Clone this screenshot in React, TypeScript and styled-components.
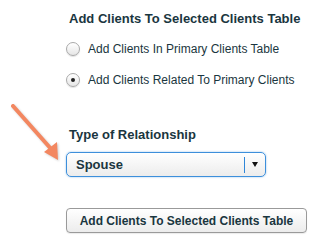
import React, { useState } from 'react';
import styled, { createGlobalStyle } from 'styled-components';

const GlobalStyle = createGlobalStyle`
    html, body {
        margin: 0;
        padding: 0;
        background: #ffffff;
    }
    body {
        font-family: "Liberation Sans", Arial, Helvetica, sans-serif;
        color: #1a3640;
    }
`;

const Page = styled.div`
    position: relative;
    width: 318px;
    height: 246px;
    overflow: hidden;
    padding: 11px 0 0 66px;
    box-sizing: border-box;
`;

const Heading = styled.div`
    font-size: 13px;
    font-weight: bold;
    line-height: 15px;
    padding-left: 3px;
    white-space: nowrap;
`;

const RadioList = styled.div`
    display: flex;
    flex-direction: column;
    gap: 15px;
    margin-top: 15px;
`;

const RadioRow = styled.label`
    display: flex;
    align-items: center;
    gap: 8px;
    font-size: 12px;
    line-height: 16px;
    white-space: nowrap;
    cursor: pointer;
`;

const RadioCircle = styled.span<{ checked: boolean }>`
    display: inline-flex;
    align-items: center;
    justify-content: center;
    width: 12px;
    height: 12px;
    border-radius: 50%;
    border: 1px solid #a9a9a9;
    background: linear-gradient(#ffffff, #e6e6e6);
    box-shadow: inset 0 1px 1px rgba(255, 255, 255, 0.8), 0 1px 1px rgba(0, 0, 0, 0.12);
    &::after {
        content: '';
        display: ${(props) => (props.checked ? 'block' : 'none')};
        width: 4px;
        height: 4px;
        border-radius: 50%;
        background: #222222;
    }
`;

const Label = styled.div`
    font-size: 13px;
    font-weight: bold;
    line-height: 15px;
    padding-left: 3px;
    margin-top: 39px;
`;

const SelectBox = styled.div`
    display: flex;
    align-items: center;
    width: 200px;
    height: 25px;
    margin-top: 10px;
    box-sizing: border-box;
    border: 1px solid #3d8fdb;
    border-radius: 5px;
    background: linear-gradient(#ffffff, #ececec);
    box-shadow: 0 0 2px rgba(61, 143, 219, 0.6);
`;

const SelectValue = styled.div`
    flex: 1;
    padding-left: 9px;
    font-size: 13px;
    font-weight: bold;
    line-height: 15px;
`;

const Divider = styled.div`
    width: 1px;
    height: 16px;
    background: #2f86d8;
`;

const Caret = styled.div`
    width: 20px;
    display: flex;
    justify-content: center;
    align-items: center;
    &::after {
        content: '';
        border-left: 3.5px solid transparent;
        border-right: 3.5px solid transparent;
        border-top: 5px solid #111111;
    }
`;

const Button = styled.button`
    display: block;
    width: 241px;
    height: 25px;
    margin-top: 31px;
    padding: 0;
    border: 1px solid #9a9a9a;
    border-radius: 4px;
    background: linear-gradient(#ffffff, #ececec);
    box-shadow: 0 1px 1px rgba(0, 0, 0, 0.08);
    font-family: "Liberation Sans", Arial, Helvetica, sans-serif;
    font-size: 12px;
    font-weight: bold;
    color: #1a3640;
    white-space: nowrap;
`;

const Pointer = styled.svg`
    position: absolute;
    left: 8px;
    top: 100px;
    filter: drop-shadow(1px 1px 1px rgba(0, 0, 0, 0.2));
`;

const options = [
    'Add Clients In Primary Clients Table',
    'Add Clients Related To Primary Clients',
];

export default function App() {
    const [selected, setSelected] = useState(1);
    return (
        <>
            <GlobalStyle />
            <Page>
                <Heading>Add Clients To Selected Clients Table</Heading>
                <RadioList>
                    {options.map((text, i) => (
                        <RadioRow key={text} onClick={() => setSelected(i)}>
                            <RadioCircle checked={selected === i} />
                            {text}
                        </RadioRow>
                    ))}
                </RadioList>
                <Label>Type of Relationship</Label>
                <SelectBox>
                    <SelectValue>Spouse</SelectValue>
                    <Divider />
                    <Caret />
                </SelectBox>
                <Button>Add Clients To Selected Clients Table</Button>
                <Pointer width="60" height="70" viewBox="0 0 60 70">
                    <line x1="5" y1="6" x2="44" y2="50" stroke="#f38760" strokeWidth="4" strokeLinecap="round" />
                    <polygon points="50,60 36,52 49,42" fill="#f38760" />
                </Pointer>
            </Page>
        </>
    );
}
